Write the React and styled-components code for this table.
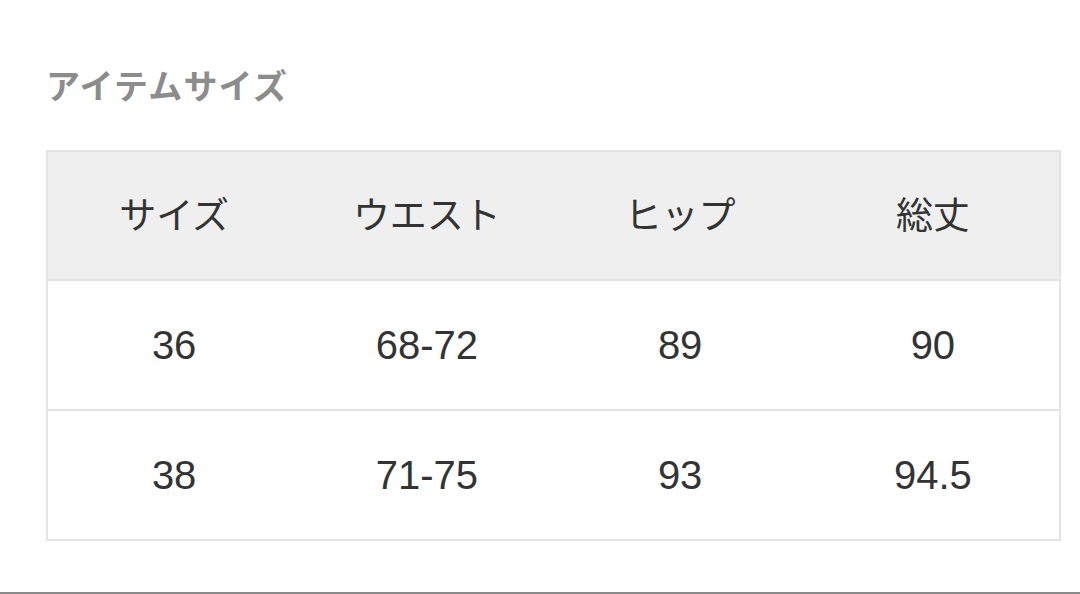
import React from 'react';
import styled, { createGlobalStyle } from 'styled-components';

const GlobalStyle = createGlobalStyle`
  html, body {
    margin: 0;
    padding: 0;
    background: #ffffff;
  }
  body {
    font-family: "Liberation Sans", "Noto Sans CJK JP", sans-serif;
  }
`;

const Page = styled.div`
  width: 1080px;
  height: 594px;
  box-sizing: border-box;
  padding: 0 19px 0 46px;
  border-bottom: 2px solid #8a8a8a;
  overflow: hidden;
`;

const Title = styled.h2`
  margin: 0 0 46px;
  padding-top: 66px;
  font-family: "Noto Sans CJK JP", sans-serif;
  font-size: 34px;
  line-height: 38px;
  font-weight: 700;
  color: #8c8c8c;
  letter-spacing: 1.2px;
`;

const SizeTable = styled.table`
  width: 1015px;
  border-collapse: collapse;
  border: 2px solid #e4e4e4;
  table-layout: fixed;
`;

const HeadCell = styled.th`
  height: 129px;
  padding: 0 0 5px;
  box-sizing: border-box;
  background: #efefef;
  font-family: "Noto Sans CJK JP", sans-serif;
  font-size: 37px;
  font-weight: 400;
  color: #333333;
  text-align: center;
  border-bottom: 2px solid #e4e4e4;
`;

const Cell = styled.td`
  height: 128px;
  padding: 0;
  font-family: "Liberation Sans", "Noto Sans CJK JP", sans-serif;
  font-size: 40px;
  color: #333333;
  text-align: center;
  border-top: 2px solid #e4e4e4;
`;

const headers = ['サイズ', 'ウエスト', 'ヒップ', '総丈'];
const rows = [
  ['36', '68-72', '89', '90'],
  ['38', '71-75', '93', '94.5'],
];

export default function App() {
  return (
    <>
      <GlobalStyle />
      <Page>
        <Title>アイテムサイズ</Title>
        <SizeTable>
          <thead>
            <tr>
              {headers.map((h) => (
                <HeadCell key={h}>{h}</HeadCell>
              ))}
            </tr>
          </thead>
          <tbody>
            {rows.map((row) => (
              <tr key={row[0]}>
                {row.map((v, i) => (
                  <Cell key={i}>{v}</Cell>
                ))}
              </tr>
            ))}
          </tbody>
        </SizeTable>
      </Page>
    </>
  );
}
